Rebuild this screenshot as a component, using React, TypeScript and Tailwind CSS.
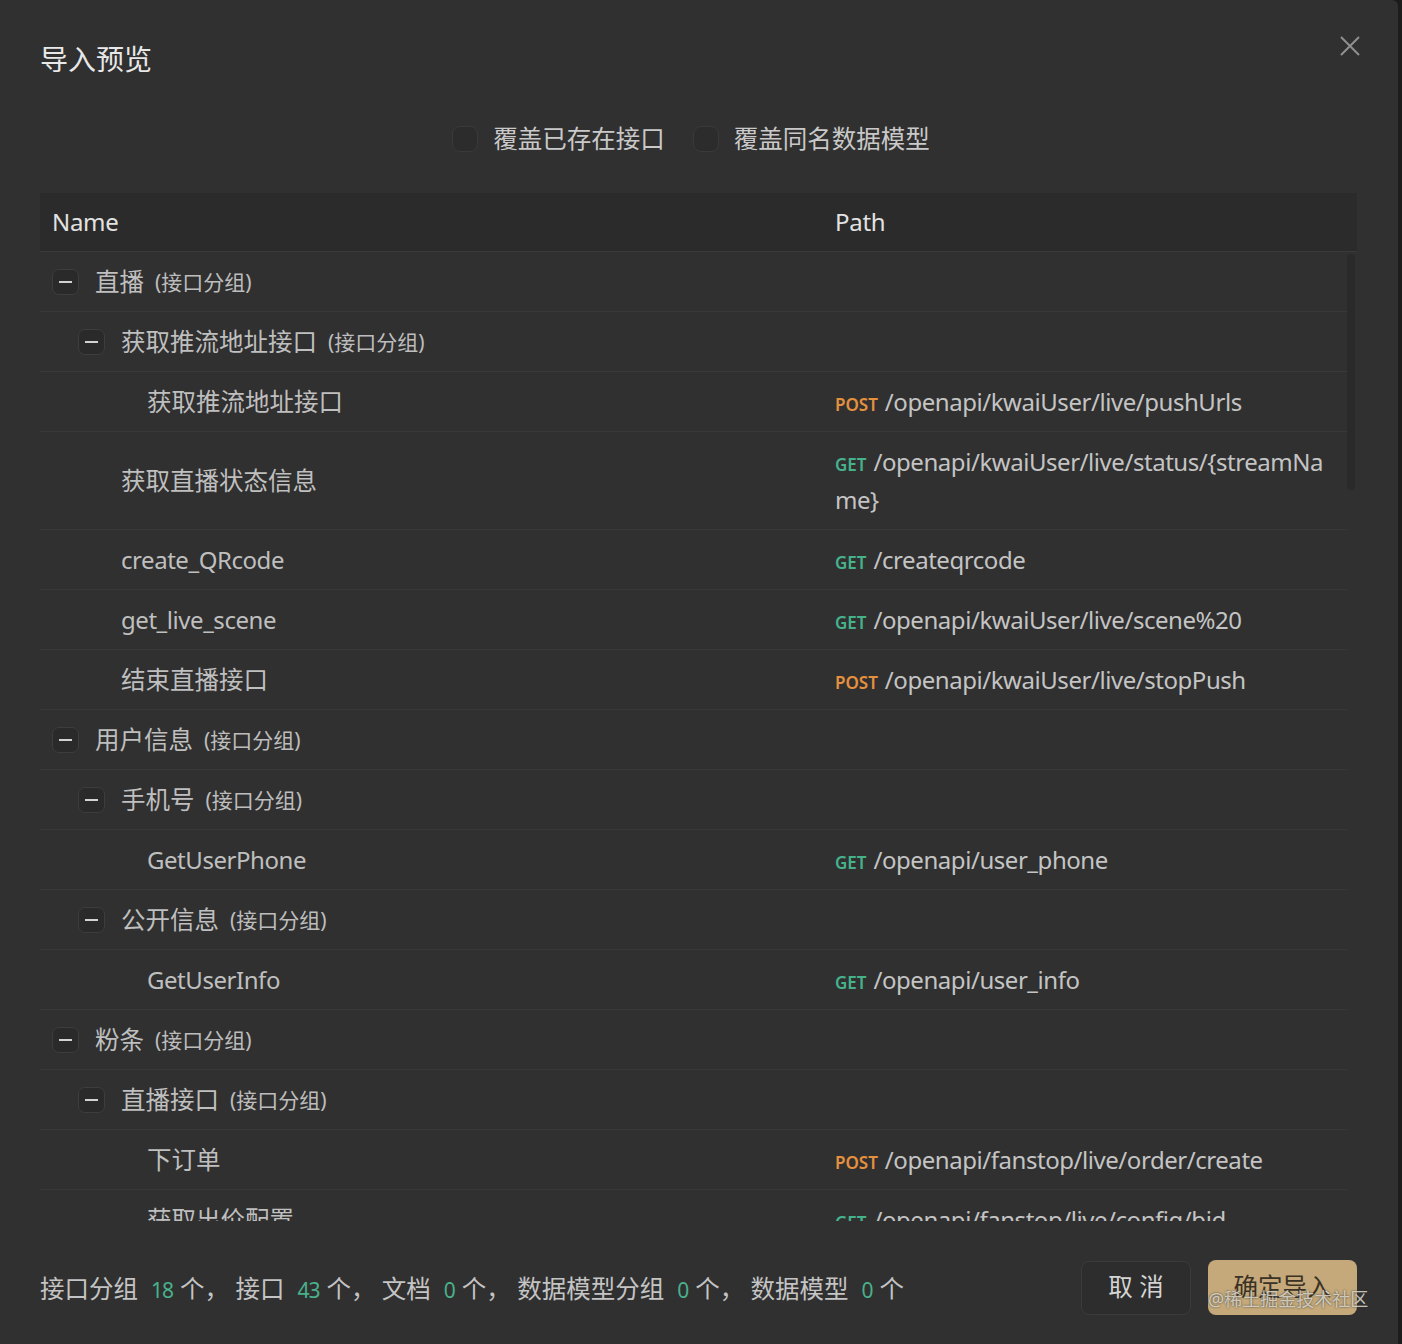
import React from "react";

type Row = {
  name: string;
  level: number;
  group?: boolean;
  method?: "GET" | "POST";
  path?: string;
};

const rows: Row[] = [
  { name: "直播", level: 0, group: true },
  { name: "获取推流地址接口", level: 1, group: true },
  { name: "获取推流地址接口", level: 2, method: "POST", path: "/openapi/kwaiUser/live/pushUrls" },
  { name: "获取直播状态信息", level: 1, method: "GET", path: "/openapi/kwaiUser/live/status/{streamName}" },
  { name: "create_QRcode", level: 1, method: "GET", path: "/createqrcode" },
  { name: "get_live_scene", level: 1, method: "GET", path: "/openapi/kwaiUser/live/scene%20" },
  { name: "结束直播接口", level: 1, method: "POST", path: "/openapi/kwaiUser/live/stopPush" },
  { name: "用户信息", level: 0, group: true },
  { name: "手机号", level: 1, group: true },
  { name: "GetUserPhone", level: 2, method: "GET", path: "/openapi/user_phone" },
  { name: "公开信息", level: 1, group: true },
  { name: "GetUserInfo", level: 2, method: "GET", path: "/openapi/user_info" },
  { name: "粉条", level: 0, group: true },
  { name: "直播接口", level: 1, group: true },
  { name: "下订单", level: 2, method: "POST", path: "/openapi/fanstop/live/order/create" },
  { name: "获取出价配置", level: 2, method: "GET", path: "/openapi/fanstop/live/config/bid" },
  { name: "修改订单", level: 2, method: "POST", path: "/openapi/fanstop/live/order/update" },
];

const groupIndent: Record<number, string> = { 0: "pl-0", 1: "pl-[26px]", 2: "pl-[52px]" };
const leafIndent: Record<number, string> = { 1: "pl-[69px]", 2: "pl-[95px]" };

// latin text in the reference runs a bit narrower than Noto Sans
const isLatin = (s: string) => /^[\x00-\x7f]+$/.test(s);
const nameText = (s: string) => (isLatin(s) ? "text-[24px] tracking-[-0.45px]" : "text-[24.5px]");

function Toggle() {
  return (
    <span className="flex h-[26px] w-[27px] shrink-0 items-center justify-center rounded-[7px] border border-[#3d3d3d] bg-[#2a2a2a]">
      <span className="h-[2px] w-[13px] bg-[#d2d2d2]" />
    </span>
  );
}

function Method({ method }: { method: "GET" | "POST" }) {
  return (
    <span className={`mr-[7px] text-[17px] font-semibold leading-none tracking-normal ${method === "POST" ? "text-[#e5903f]" : "text-[#45b28c]"}`}>
      {method}
    </span>
  );
}

function TableRow({ row }: { row: Row }) {
  return (
    <div className="flex items-center border-b border-[#383838] pb-[10px] pt-[11px] leading-[38px]">
      <div className="w-[784px] shrink-0 pl-[12px]">
        {row.group ? (
          <div className={`flex items-center gap-[16px] ${groupIndent[row.level]}`}>
            <Toggle />
            <span className="text-[24.5px] text-[#bfbfbf]">{row.name}</span>
            <span className="-ml-[5px] text-[21px] text-[#bdbdbd]">(接口分组)</span>
          </div>
        ) : (
          <div className={`text-[#bfbfbf] ${nameText(row.name)} ${leafIndent[row.level]}`}>{row.name}</div>
        )}
      </div>
      <div className="min-w-0 flex-1 break-all pl-[11px] pr-[14px] text-[24px] tracking-[-0.45px] text-[#c4c4c4]">
        {row.method && <Method method={row.method} />}
        {row.path}
      </div>
    </div>
  );
}

function Num({ n }: { n: number }) {
  return <span className="ml-[13px] mr-[7px] text-[21px] tracking-[-1px] text-[#49b08c]">{n}</span>;
}

export default function App() {
  return (
    <div className="flex h-[1344px] w-[1402px] bg-[#1c1c1c] font-['Noto_Sans','Noto_Sans_CJK_SC',sans-serif]">
      <div className="flex w-[1398px] flex-col rounded-tr-[6px] bg-[#303030] pl-[40px] pr-[41px]">
        {/* title */}
        <div className="flex items-start justify-between pt-[38px]">
          <h1 className="text-[28px] leading-[42px] text-[#e8e8e8]">导入预览</h1>
          <svg className="-mr-[3px] -mt-[2px]" width="20" height="20" viewBox="0 0 20 20" fill="none" stroke="#909090" strokeWidth="2">
            <path d="M1 1 L19 19 M19 1 L1 19" />
          </svg>
        </div>

        {/* options */}
        <div className="mt-[40px] flex h-[38px] items-center justify-center pr-[15px] text-[24.5px] text-[#c9c9c9]">
          <label className="flex items-center gap-[15px]">
            <span className="h-[26px] w-[26px] rounded-[8px] border border-[#3a3a3a] bg-[#2c2c2c]" />
            覆盖已存在接口
          </label>
          <label className="ml-[28px] flex items-center gap-[15px]">
            <span className="h-[26px] w-[26px] rounded-[8px] border border-[#3a3a3a] bg-[#2c2c2c]" />
            覆盖同名数据模型
          </label>
        </div>

        {/* table */}
        <div className="mt-[35px] flex min-h-0 flex-1 flex-col">
          <div className="flex h-[59px] shrink-0 items-center border-b border-[#393939] bg-[#2b2b2b] text-[24px] text-[#e2e2e2]">
            <div className="w-[784px] pl-[12px] tracking-[-0.3px]">Name</div>
            <div className="pl-[11px] tracking-[-0.3px]">Path</div>
          </div>
          <div className="flex h-[970px] overflow-hidden">
            <div className="flex-1">
              {rows.map((row, i) => (
                <TableRow key={i} row={row} />
              ))}
            </div>
            <div className="w-[10px] shrink-0 pt-[2px]">
              <div className="h-[236px] w-[8px] rounded-full bg-[#2a2a2a]" />
            </div>
          </div>
        </div>

        {/* footer */}
        <div className="flex items-center justify-between pb-[29px] pt-[39px]">
          <div className="mt-[4px] text-[24.5px] text-[#c4c4c4]">
            接口分组<Num n={18} />个， 接口<Num n={43} />个， 文档<Num n={0} />个， 数据模型分组<Num n={0} />个， 数据模型<Num n={0} />个
          </div>
          <div className="flex items-center gap-[17px]">
            <button className="h-[54px] w-[110px] rounded-[8px] border border-[#3b3b3b] bg-[#2d2d2d] text-[24.5px] text-[#d4d4d4]">
              取 消
            </button>
            <div className="relative">
              <button className="h-[55px] w-[149px] rounded-[8px] bg-[#c5a97a] text-[24.5px] text-[#3b3226]">确定导入</button>
              <span className="pointer-events-none absolute left-[0px] top-[27px] whitespace-nowrap text-[18px] leading-[24px] text-[#ece7dc]/80 [text-shadow:0_0_2px_#333]">
                @稀土掘金技术社区
              </span>
            </div>
          </div>
        </div>
      </div>
      <div className="flex-1" />
    </div>
  );
}
